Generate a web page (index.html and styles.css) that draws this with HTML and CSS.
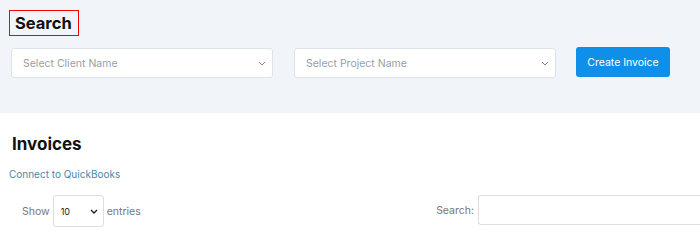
FILE: index.html
```html
<!DOCTYPE html>
<html lang="en">
    <head>
        <meta charset="utf-8">
        <title>Invoices</title>
        <link rel="stylesheet" href="styles.css">
    </head>
    <body>
        <!-- search panel -->
        <section class="search-panel">
            <h2 class="search-title">Search</h2>
            <div class="search-row">
                <div class="select-box wide">
                    <span>Select Client Name</span>
                    <svg width="8" height="5" viewBox="0 0 8 5"><path d="M1 1l3 3 3-3" fill="none" stroke="#888" stroke-width="1"/></svg>
                </div>
                <div class="select-box wide">
                    <span>Select Project Name</span>
                    <svg width="8" height="5" viewBox="0 0 8 5"><path d="M1 1l3 3 3-3" fill="none" stroke="#888" stroke-width="1"/></svg>
                </div>
                <button class="btn-create">Create Invoice</button>
            </div>
        </section>

        <!-- invoices list -->
        <section class="invoices">
            <h2 class="invoices-title">Invoices</h2>
            <a class="qb-link" href="#">Connect to QuickBooks</a>
            <div class="table-tools">
                <div class="length">
                    <span>Show</span>
                    <div class="select-box small">
                        <span>10</span>
                        <svg width="8" height="5" viewBox="0 0 8 5"><path d="M1 1l3 3 3-3" fill="none" stroke="#222" stroke-width="1.4"/></svg>
                    </div>
                    <span>entries</span>
                </div>
                <div class="filter">
                    <span>Search:</span>
                    <div class="search-input"></div>
                </div>
            </div>
        </section>
    </body>
</html>
```

FILE: styles.css
```css
/* base */
body {
    margin: 0;
    font-family: Inter, "Noto Sans", sans-serif;
    color: #111;
    background: #fff;
}

/* search panel */
.search-panel {
    background: #f1f5fa;
    height: 113px;
    padding: 10px 0 0 0;
    box-sizing: border-box;
}

.search-title {
    display: inline-block;
    margin: 0 0 0 9px;
    padding: 0 6px 0 5px;
    border: 1px solid #f00;
    font-size: 16.5px;
    line-height: 24px;
    font-weight: 700;
    color: #111;
}

.search-row {
    display: flex;
    align-items: flex-start;
    margin: 12px 0 0 11px;
}

.select-box {
    display: flex;
    align-items: center;
    justify-content: space-between;
    box-sizing: border-box;
    background: #fff;
    border: 1px solid #dde3ea;
    border-radius: 3px;
}

.select-box.wide {
    width: 262px;
    height: 30px;
    padding: 0 6px 0 11px;
    margin-right: 21px;
    font-size: 10.5px;
    color: #999ea5;
}

.select-box.wide + .select-box.wide {
    margin-right: 20px;
}

.btn-create {
    width: 94px;
    height: 30px;
    margin-top: -1px;
    background: #0d8fea;
    color: #fff;
    border: none;
    border-radius: 3px;
    font-family: Inter, sans-serif;
    font-size: 10.5px;
}

/* invoices */
.invoices {
    padding: 20px 0 0 0;
}

.invoices-title {
    margin: 0 0 0 12px;
    font-size: 17px;
    line-height: 22px;
    font-weight: 700;
}

.qb-link {
    display: block;
    margin: 13px 0 0 9px;
    font-size: 10px;
    line-height: 13px;
    color: #4b87a9;
    text-decoration: none;
}

.table-tools {
    display: flex;
    justify-content: space-between;
    margin-top: 14px;
    font-size: 10.5px;
    color: #777;
}

.length {
    display: flex;
    align-items: center;
    margin-left: 22px;
}

.select-box.small {
    width: 51px;
    height: 32px;
    margin: 0 3px 0 3px;
    padding: 0 5px 0 7px;
    border-color: #dedede;
    font-size: 9px;
    color: #222;
}

.filter {
    display: flex;
    align-items: center;
    margin-top: -2px;
}

.search-input {
    width: 222px;
    height: 30px;
    margin-left: 4px;
    box-sizing: border-box;
    border: 1px solid #dedede;
    border-right: none;
    border-radius: 3px 0 0 3px;
}
```
